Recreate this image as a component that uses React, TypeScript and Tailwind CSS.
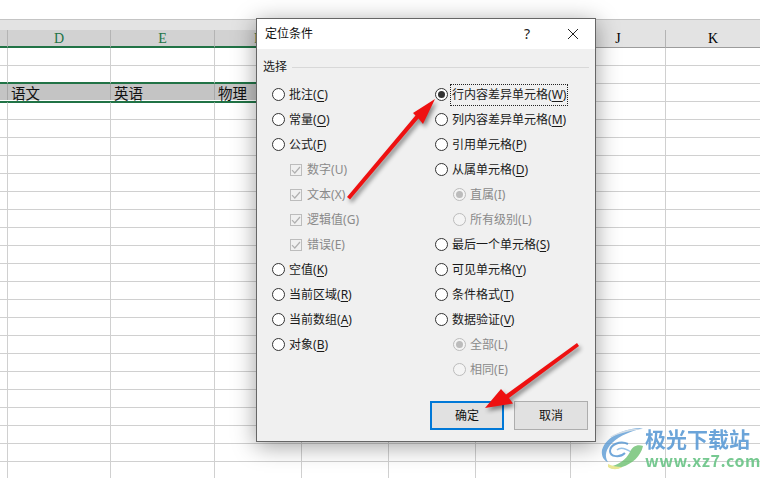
import React from 'react';

const columns = [
  { name: '', selected: true },
  { name: 'D', selected: true },
  { name: 'E', selected: true },
  { name: 'F', selected: true },
  { name: 'G', selected: true },
  { name: 'H', selected: true },
  { name: 'I', selected: true },
  { name: 'J', selected: false },
  { name: 'K', selected: false },
];

const gridCols = 'grid grid-cols-[8px_103px_104px_87px_87px_87px_95px_95px_95px]';
const rowText: Record<string, string> = { D: '语文', E: '英语', F: '物理' };

function Sheet() {
  return (
    <div className="h-[478px] overflow-hidden bg-white">
      <div className="h-[20px] border-b border-[#c4c4c4]" />
      <div className="h-[10px] bg-[#e3e3e3]" />

      {/* Column letters */}
      <div className={gridCols}>
        {columns.map((c) => (
          <div
            key={c.name}
            className={
              c.selected
                ? 'h-[18px] bg-[#d2d2d2] border-r border-b-2 border-r-[#b4b4b4] border-b-[#217346] text-[#217346] text-center text-[14px] leading-[17px]'
                : 'h-[18px] bg-[#e3e3e3] border-r border-b border-r-[#b4b4b4] border-b-[#9c9c9c] text-black text-center text-[14px] leading-[17px]'
            }
            style={{ fontFamily: '"Liberation Serif", serif' }}
          >
            {c.name}
          </div>
        ))}
      </div>

      {/* Cells */}
      {Array.from({ length: 24 }).map((_, row) => (
        <div key={row} className={gridCols}>
          {columns.map((c) => {
            if (row === 1 && c.selected) {
              return <div key={c.name} className="h-[18px] border-r border-b-2 border-r-[#d0d0d0] border-b-[#217346]" />;
            }
            if (row === 2 && c.selected) {
              return (
                <div key={c.name} className="h-[18px] border-b border-[#217346]">
                  <div className="h-[16px] bg-[#c4c4c4] border-r border-[#a8a8a8] pl-[3px] flex items-center">
                    <span
                      className="translate-y-[1px] text-[14.5px] leading-[16px] text-[#111] whitespace-nowrap"
                      style={{ fontFamily: '"Noto Sans CJK SC", sans-serif' }}
                    >
                      {rowText[c.name]}
                    </span>
                  </div>
                </div>
              );
            }
            if (row === 3 && c.selected) {
              return <div key={c.name} className="h-[18px] border-t border-r border-b border-t-[#217346] border-r-[#d0d0d0] border-b-[#d0d0d0]" />;
            }
            return <div key={c.name} className="h-[18px] border-r border-b border-[#d0d0d0]" />;
          })}
        </div>
      ))}
    </div>
  );
}

function Radio({ checked, disabled }: { checked?: boolean; disabled?: boolean }) {
  return (
    <span
      className={
        disabled
          ? 'w-[13px] h-[13px] shrink-0 rounded-full border border-[#bcbcbc] bg-[#f4f4f4] flex items-center justify-center'
          : 'w-[13px] h-[13px] shrink-0 rounded-full border border-[#333333] bg-white flex items-center justify-center'
      }
    >
      {checked && (
        <span className={disabled ? 'w-[7px] h-[7px] rounded-full bg-[#bcbcbc]' : 'w-[7px] h-[7px] rounded-full bg-[#333333]'} />
      )}
    </span>
  );
}

function CheckBox() {
  return (
    <span className="w-[12px] h-[12px] shrink-0 border border-[#bcbcbc] bg-[#f0f0f0] flex items-center justify-center">
      <svg width="10" height="10" viewBox="0 0 10 10" fill="none">
        <path d="M1 5.2 L3.8 8 L9 2" stroke="#b0b0b0" strokeWidth="1.2" />
      </svg>
    </span>
  );
}

type OptionProps = {
  label: string;
  hotkey: string;
  type?: 'radio' | 'check';
  indent?: boolean;
  checked?: boolean;
  disabled?: boolean;
  focused?: boolean;
};

function Option({ label, hotkey, type = 'radio', indent, checked, disabled, focused }: OptionProps) {
  return (
    <div className={indent ? 'h-[25px] flex items-center pl-[18px]' : 'h-[25px] flex items-center'}>
      {type === 'radio' ? <Radio checked={checked} disabled={disabled} /> : <CheckBox />}
      <span
        className={
          (type === 'check' ? 'ml-[5px] ' : 'ml-[4px] ') +
          (disabled ? 'text-[#8a8a8a] ' : 'text-[#1a1a1a] ') +
          (focused ? 'outline-1 outline-dotted outline-offset-[1px] outline-[#222222]' : '')
        }
      >
        {label}(
        {disabled ? hotkey : <span className="underline underline-offset-2">{hotkey}</span>})
      </span>
    </div>
  );
}

function Dialog() {
  return (
    <div
      className="absolute left-[256px] top-[18px] w-[340px] h-[424px] flex flex-col border border-[#666666] bg-[#f0f0f0] shadow-[0_4px_22px_rgba(0,0,0,0.38)] text-[12px] leading-[18px]"
      style={{ fontFamily: '"Noto Sans", "Noto Sans CJK SC", sans-serif' }}
    >
      <div className="h-[30px] shrink-0 bg-white flex items-center pl-[8px] text-[#111]">
        <span className="flex-1">定位条件</span>
        <span className="w-[14px] text-center text-[14px] text-[#222] -translate-x-[3px]">?</span>
        <svg className="ml-[30px] mr-[16px]" width="12" height="12" viewBox="0 0 12 12" fill="none">
          <path d="M1 1 L11 11 M11 1 L1 11" stroke="#222222" strokeWidth="1" />
        </svg>
      </div>

      {/* 选择 group */}
      <div className="mt-[10px] pl-[6px] pr-[6px] flex items-center gap-[5px] h-[16px] text-[#222]">
        <span>选择</span>
        <span className="flex-1 h-px bg-[#d8d8d8]" />
      </div>

      <div className="mt-[7px] grid grid-cols-[163px_1fr] pl-[15px]">
        <div className="flex flex-col">
          <Option label="批注" hotkey="C" />
          <Option label="常量" hotkey="O" />
          <Option label="公式" hotkey="F" />
          <Option type="check" indent disabled label="数字" hotkey="U" />
          <Option type="check" indent disabled label="文本" hotkey="X" />
          <Option type="check" indent disabled label="逻辑值" hotkey="G" />
          <Option type="check" indent disabled label="错误" hotkey="E" />
          <Option label="空值" hotkey="K" />
          <Option label="当前区域" hotkey="R" />
          <Option label="当前数组" hotkey="A" />
          <Option label="对象" hotkey="B" />
        </div>
        <div className="flex flex-col">
          <Option checked focused label="行内容差异单元格" hotkey="W" />
          <Option label="列内容差异单元格" hotkey="M" />
          <Option label="引用单元格" hotkey="P" />
          <Option label="从属单元格" hotkey="D" />
          <Option indent disabled checked label="直属" hotkey="I" />
          <Option indent disabled label="所有级别" hotkey="L" />
          <Option label="最后一个单元格" hotkey="S" />
          <Option label="可见单元格" hotkey="Y" />
          <Option label="条件格式" hotkey="T" />
          <Option label="数据验证" hotkey="V" />
          <Option indent disabled checked label="全部" hotkey="L" />
          <Option indent disabled label="相同" hotkey="E" />
        </div>
      </div>

      <div className="mt-auto mb-[11px] mr-[7px] flex justify-end gap-[10px]">
        <button className="w-[74px] h-[29px] border-2 border-[#0078d7] bg-[#e1e1e1] text-[#111]">确定</button>
        <button className="w-[74px] h-[29px] border border-[#adadad] bg-[#e1e1e1] text-[#111]">取消</button>
      </div>
    </div>
  );
}

function Arrows() {
  return (
    <svg className="absolute inset-0 pointer-events-none drop-shadow-[2px_3px_2px_rgba(0,0,0,0.45)]" width="760" height="478" viewBox="0 0 760 478">
      <polygon points="435,99 423,124 418.5,118.5 350,199.5 347,197 415.5,115.5 413,113" fill="#ee1111" />
      <polygon points="485,408 501,389 506,394.5 577,343 579,346 509,398 513,403.5" fill="#ee1111" />
    </svg>
  );
}

function Logo() {
  return (
    <div className="absolute left-[600px] top-[425px] flex items-start">
      <svg width="46" height="48" viewBox="600 425 46 48" className="opacity-80">
        <path d="M643 428 C625 428 606 436 602 450 C601 456 604 461 608 462 C604 456 606 449 612 443 C620 435 632 431 643 428 Z" fill="#5b9bd5" />
        <path d="M610 437 C620 431 632 428 642 429 C630 431 620 433 612 437 Z" fill="#c9d6e2" />
        <path d="M628 444 C620 440 610 445 610 451 C610 457 620 458 625 453" stroke="#4f93d2" strokeWidth="2" fill="none" />
        <path d="M617 450 C620 447 625 448 631 452" stroke="#7fb4e0" strokeWidth="1.5" fill="none" />
        <path d="M643 446 C641 456 632 464 622 467 C617 469 612 469 609 467 C618 465 626 460 630 452 C632 447 637 444 643 446 Z" fill="#6cc070" />
        <path d="M608 464 C612 466 617 467 622 467 C618 470 612 470 608 467 Z" fill="#e4e27a" />
      </svg>
      <div className="ml-[-1px] flex flex-col" style={{ fontFamily: '"Noto Sans CJK SC", "Noto Sans", sans-serif' }}>
        <div className="h-[26px] text-[21px] leading-[26px] font-bold text-[#5b9bd5] opacity-90 whitespace-nowrap">极光下载站</div>
        <div className="h-[18px] text-[16px] leading-[18px] font-semibold text-[#69c486] tracking-[0.5px] opacity-90 whitespace-nowrap">www.xz7.com</div>
      </div>
    </div>
  );
}

export default function App() {
  return (
    <div className="relative w-[760px] h-[478px] overflow-hidden">
      <Sheet />
      <Dialog />
      <Arrows />
      <Logo />
    </div>
  );
}
